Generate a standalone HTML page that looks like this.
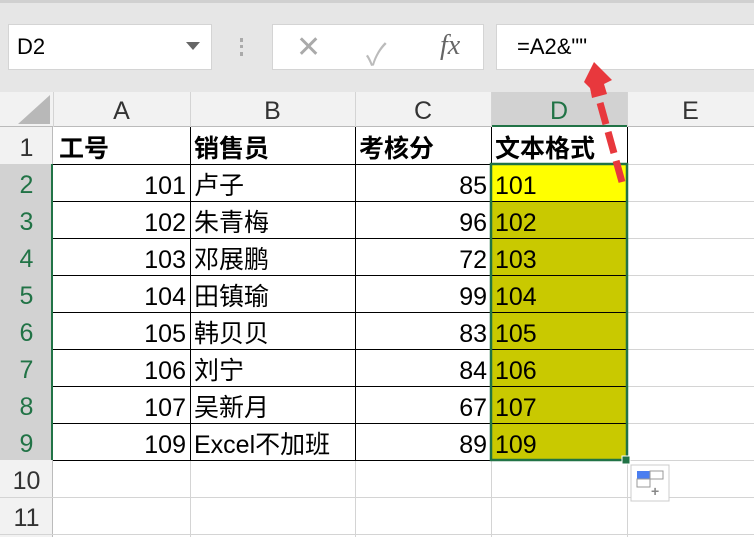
<html><head><style>
body{margin:0;width:754px;height:537px;overflow:hidden;background:#fff;font-family:"Liberation Sans","Noto Sans CJK SC",sans-serif;position:relative}
.a{position:absolute;box-sizing:border-box}
.c{position:absolute;box-sizing:border-box;font-size:25px;line-height:37px;white-space:nowrap;color:#000;padding:0 4px;margin-top:3px}
.h{position:absolute;font-size:25px;color:#333;text-align:center;line-height:35px;margin-top:2px}
</style></head><body>
<div class="a" style="left:0;top:0;width:754px;height:92px;background:#e6e6e6;border-top:3px solid #d0d0d0"></div>
<div class="a" style="left:8px;top:24px;width:204px;height:46px;background:#fff;border:1px solid #d4d4d4;font-size:22px;line-height:44px;padding-left:8px">D2</div>
<div class="a" style="left:186px;top:42px;width:0;height:0;border-left:7px solid transparent;border-right:7px solid transparent;border-top:8px solid #666"></div>
<div class="a" style="left:240px;top:38px;width:3px;height:18px;border-left:3px dotted #aaa"></div>
<div class="a" style="left:272px;top:24px;width:212px;height:46px;background:#fff;border:1px solid #d4d4d4"></div>
<div class="a" style="left:296px;top:30px;font-size:30px;color:#aaa">✕</div>
<div class="a" style="left:366px;top:30px;font-size:30px;color:#bbb">✓</div>
<div class="a" style="left:440px;top:30px;font-size:28px;color:#666;font-family:'Liberation Serif',serif;font-style:italic">fx</div>
<div class="a" style="left:496px;top:24px;width:260px;height:46px;background:#fff;border:1px solid #d4d4d4;font-size:22px;line-height:44px;padding-left:20px">=A2&amp;""</div>
<div class="a" style="left:0;top:92px;width:754px;height:35px;background:#f2f2f2;border-bottom:1px solid #bbb"></div>
<div class="a" style="left:0;top:127px;width:53px;height:410px;background:#f2f2f2;border-right:1px solid #bbb"></div>
<div class="a" style="left:491px;top:92px;width:136px;height:35px;background:#d2d2d2;border-bottom:2px solid #217346"></div>
<div class="a" style="left:0;top:164px;width:53px;height:296px;background:#d2d2d2;border-right:2px solid #217346"></div>
<svg class="a" style="left:0;top:92px" width="754" height="445">
<polygon points="18,32 50,32 50,3" fill="#b8b8b8"/>
<g stroke="#d4d4d4" stroke-width="1">
<line x1="53.5" y1="0" x2="53.5" y2="35"/><line x1="190.5" y1="0" x2="190.5" y2="445"/><line x1="355.5" y1="0" x2="355.5" y2="445"/><line x1="491.5" y1="0" x2="491.5" y2="445"/><line x1="627.5" y1="0" x2="627.5" y2="445"/>
<line x1="0" y1="405.5" x2="754" y2="405.5"/><line x1="0" y1="442.5" x2="754" y2="442.5"/>
<line x1="627" y1="72.5" x2="754" y2="72.5"/><line x1="627" y1="109.5" x2="754" y2="109.5"/><line x1="627" y1="146.5" x2="754" y2="146.5"/><line x1="627" y1="183.5" x2="754" y2="183.5"/><line x1="627" y1="220.5" x2="754" y2="220.5"/><line x1="627" y1="257.5" x2="754" y2="257.5"/><line x1="627" y1="294.5" x2="754" y2="294.5"/><line x1="627" y1="331.5" x2="754" y2="331.5"/><line x1="627" y1="368.5" x2="754" y2="368.5"/>
</g>
<rect x="492" y="72" width="135" height="37" fill="#ffff00"/>
<rect x="492" y="109" width="135" height="259" fill="#c9c900"/>
<g stroke="#000" stroke-width="1">
<line x1="53" y1="72.5" x2="627" y2="72.5"/><line x1="53" y1="109.5" x2="627" y2="109.5"/><line x1="53" y1="146.5" x2="627" y2="146.5"/><line x1="53" y1="183.5" x2="627" y2="183.5"/><line x1="53" y1="220.5" x2="627" y2="220.5"/><line x1="53" y1="257.5" x2="627" y2="257.5"/><line x1="53" y1="294.5" x2="627" y2="294.5"/><line x1="53" y1="331.5" x2="627" y2="331.5"/><line x1="53" y1="368.5" x2="627" y2="368.5"/>
<line x1="190.5" y1="35" x2="190.5" y2="368"/><line x1="355.5" y1="35" x2="355.5" y2="368"/><line x1="491.5" y1="35" x2="491.5" y2="368"/><line x1="627.5" y1="35" x2="627.5" y2="72"/>
</g>
<rect x="491" y="72" width="136" height="296" fill="none" stroke="#217346" stroke-width="2.5"/>
<rect x="622" y="364" width="8" height="8" fill="#217346" stroke="#fff"/>
<rect x="631" y="373" width="38" height="36" fill="#fff" stroke="#ccc"/>
<rect x="637" y="379" width="13" height="8" fill="#4a7ef0"/><rect x="650" y="379" width="13" height="8" fill="#fff" stroke="#999"/>
<rect x="637" y="387" width="13" height="8" fill="#fff" stroke="#999"/>
<text x="651" y="404" font-size="14" fill="#888" font-weight="bold">+</text>
</svg>
<div class="h" style="left:53px;top:92px;width:137px">A</div>
<div class="h" style="left:190px;top:92px;width:165px">B</div>
<div class="h" style="left:355px;top:92px;width:136px">C</div>
<div class="h" style="left:491px;top:92px;width:136px;color:#217346">D</div>
<div class="h" style="left:627px;top:92px;width:127px">E</div>
<div class="h" style="left:0;top:129px;width:53px">1</div>
<div class="h" style="left:0;top:166px;width:53px;color:#217346">2</div>
<div class="h" style="left:0;top:203px;width:53px;color:#217346">3</div>
<div class="h" style="left:0;top:240px;width:53px;color:#217346">4</div>
<div class="h" style="left:0;top:277px;width:53px;color:#217346">5</div>
<div class="h" style="left:0;top:314px;width:53px;color:#217346">6</div>
<div class="h" style="left:0;top:351px;width:53px;color:#217346">7</div>
<div class="h" style="left:0;top:388px;width:53px;color:#217346">8</div>
<div class="h" style="left:0;top:425px;width:53px;color:#217346">9</div>
<div class="h" style="left:0;top:462px;width:53px">10</div>
<div class="h" style="left:0;top:499px;width:53px">11</div>
<div class="c" style="left:55px;top:128px;font-weight:bold">工号</div>
<div class="c" style="left:190px;top:128px;font-weight:bold">销售员</div>
<div class="c" style="left:355px;top:128px;font-weight:bold">考核分</div>
<div class="c" style="left:491px;top:128px;font-weight:bold">文本格式</div>
<div class="c" style="left:53px;top:165px;width:137px;text-align:right">101</div><div class="c" style="left:190px;top:165px">卢子</div><div class="c" style="left:355px;top:165px;width:136px;text-align:right">85</div><div class="c" style="left:491px;top:165px">101</div>
<div class="c" style="left:53px;top:202px;width:137px;text-align:right">102</div><div class="c" style="left:190px;top:202px">朱青梅</div><div class="c" style="left:355px;top:202px;width:136px;text-align:right">96</div><div class="c" style="left:491px;top:202px">102</div>
<div class="c" style="left:53px;top:239px;width:137px;text-align:right">103</div><div class="c" style="left:190px;top:239px">邓展鹏</div><div class="c" style="left:355px;top:239px;width:136px;text-align:right">72</div><div class="c" style="left:491px;top:239px">103</div>
<div class="c" style="left:53px;top:276px;width:137px;text-align:right">104</div><div class="c" style="left:190px;top:276px">田镇瑜</div><div class="c" style="left:355px;top:276px;width:136px;text-align:right">99</div><div class="c" style="left:491px;top:276px">104</div>
<div class="c" style="left:53px;top:313px;width:137px;text-align:right">105</div><div class="c" style="left:190px;top:313px">韩贝贝</div><div class="c" style="left:355px;top:313px;width:136px;text-align:right">83</div><div class="c" style="left:491px;top:313px">105</div>
<div class="c" style="left:53px;top:350px;width:137px;text-align:right">106</div><div class="c" style="left:190px;top:350px">刘宁</div><div class="c" style="left:355px;top:350px;width:136px;text-align:right">84</div><div class="c" style="left:491px;top:350px">106</div>
<div class="c" style="left:53px;top:387px;width:137px;text-align:right">107</div><div class="c" style="left:190px;top:387px">吴新月</div><div class="c" style="left:355px;top:387px;width:136px;text-align:right">67</div><div class="c" style="left:491px;top:387px">107</div>
<div class="c" style="left:53px;top:424px;width:137px;text-align:right">109</div><div class="c" style="left:190px;top:424px">Excel不加班</div><div class="c" style="left:355px;top:424px;width:136px;text-align:right">89</div><div class="c" style="left:491px;top:424px">109</div>
<svg class="a" style="left:0;top:0" width="754" height="537">
<line x1="622" y1="182" x2="597" y2="92" stroke="#e8383d" stroke-width="7" stroke-dasharray="22,8"/>
<polygon points="584,82 594,62 612,80 604,84 607,94 592,98 590,88" fill="#e8383d"/>
</svg>
</body></html>
